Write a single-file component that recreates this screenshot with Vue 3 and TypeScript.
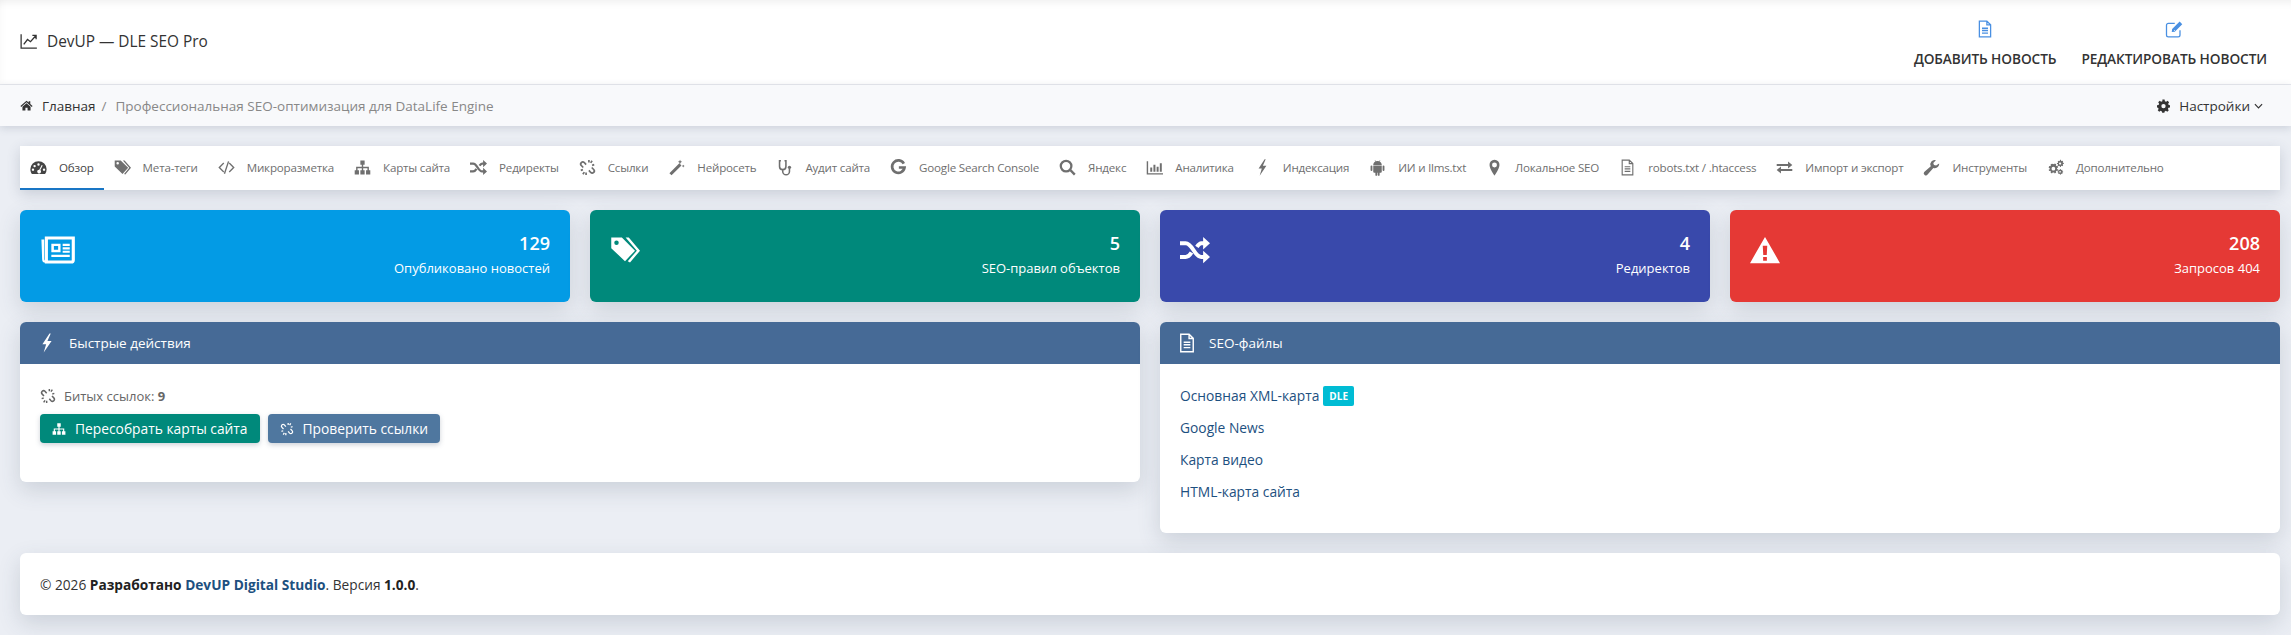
<template>
  <div class="page">
    <header class="topbar">
      <div class="brand">
        <svg class="ico brand-ico" viewBox="0 0 24 24"><path class="s thin" :d="icons.chart.s" /></svg>
        <span>DevUP — DLE SEO Pro</span>
      </div>
      <nav class="top-actions">
        <a class="top-action">
          <svg class="ico" viewBox="0 0 24 24"><path class="s thin" :d="icons.file.s" /></svg>
          <span>ДОБАВИТЬ НОВОСТЬ</span>
        </a>
        <a class="top-action">
          <svg class="ico" viewBox="0 0 24 24"><path class="s thin" :d="icons.edit.s" /><path :d="icons.edit.f" /></svg>
          <span>РЕДАКТИРОВАТЬ НОВОСТИ</span>
        </a>
      </nav>
    </header>

    <div class="crumbs">
      <div class="crumb-left">
        <svg class="ico home" viewBox="0 0 24 24"><path :d="icons.home.f" /></svg>
        <span class="crumb-home">Главная</span>
        <span class="crumb-sep">/</span>
        <span class="crumb-now">Профессиональная SEO-оптимизация для DataLife Engine</span>
      </div>
      <div class="crumb-right">
        <svg class="ico home" viewBox="0 0 24 24"><path :d="icons.cog.f" fill-rule="evenodd" /></svg>
        <span>Настройки</span>
        <svg class="chev" viewBox="0 0 10 6"><path d="M1 1l4 4 4-4" /></svg>
      </div>
    </div>

    <main class="content">
      <div class="tabs">
        <a v-for="(t, i) in tabs" :key="t.label" class="tab" :class="{ active: i === 0 }">
          <svg class="ico tab-ico" viewBox="0 0 24 24">
            <path v-if="icons[t.icon].f" :d="icons[t.icon].f" fill-rule="evenodd" />
            <path v-if="icons[t.icon].s" class="s" :d="icons[t.icon].s" :style="{ strokeWidth: icons[t.icon].w }" />
          </svg>
          <span>{{ t.label }}</span>
        </a>
      </div>

      <div class="stats">
        <div v-for="c in cards" :key="c.label" class="stat" :class="c.cls">
          <svg class="ico stat-ico" viewBox="0 0 24 24">
            <path v-if="icons[c.icon].f" :d="icons[c.icon].f" fill-rule="evenodd" />
            <path v-if="icons[c.icon].s" class="s" :d="icons[c.icon].s" :style="{ strokeWidth: icons[c.icon].w }" />
          </svg>
          <div class="stat-text">
            <div class="stat-num">{{ c.num }}</div>
            <div class="stat-label">{{ c.label }}</div>
          </div>
        </div>
      </div>

      <div class="panels">
        <section class="panel">
          <div class="panel-head">
            <svg class="ico head-ico" viewBox="0 0 24 24"><path :d="icons.bolt.f" /></svg>
            <span>Быстрые действия</span>
          </div>
          <div class="panel-body">
            <div class="broken">
              <svg class="ico" viewBox="0 0 24 24"><path class="s" :d="icons.unlink.s" /></svg>
              <span>Битых ссылок: <b>9</b></span>
            </div>
            <div class="btns">
              <button class="btn green">
                <svg class="ico" viewBox="0 0 24 24"><path :d="icons.sitemap.f" /></svg>
                Пересобрать карты сайта
              </button>
              <button class="btn steel">
                <svg class="ico" viewBox="0 0 24 24"><path class="s" :d="icons.unlink.s" /></svg>
                Проверить ссылки
              </button>
            </div>
          </div>
        </section>

        <section class="panel">
          <div class="panel-head">
            <svg class="ico head-ico" viewBox="0 0 24 24"><path class="s thin" :d="icons.file.s" /></svg>
            <span>SEO-файлы</span>
          </div>
          <ul class="panel-body links">
            <li><a>Основная XML-карта</a> <span class="badge">DLE</span></li>
            <li><a>Google News</a></li>
            <li><a>Карта видео</a></li>
            <li><a>HTML-карта сайта</a></li>
          </ul>
        </section>
      </div>

      <footer class="foot">
        <span>© 2026 <b>Разработано <a>DevUP Digital Studio</a></b>. Версия <b>1.0.0</b>.</span>
      </footer>
    </main>
  </div>
</template>

<script setup lang="ts">
type Icon = { f?: string; s?: string; w?: number }

// иконки нарисованы вручную в сетке 24x24
const icons: Record<string, Icon> = {
  dashboard: {
    f: 'M12 3A11.500 11.500 0 0 0 .5 14.500c0 2.500.8 4.800 2.200 6.500h18.600a11 11 0 0 0 2.200-6.500A11.500 11.500 0 0 0 12 3zM12 6a1.700 1.700 0 1 1 0 3.400A1.700 1.700 0 0 1 12 6zM6.500 8.300a1.700 1.700 0 1 1 0 3.400 1.700 1.700 0 0 1 0-3.400zM4.200 13.300a1.700 1.700 0 1 1 0 3.400 1.700 1.700 0 0 1 0-3.400zM19.800 13.300a1.700 1.700 0 1 1 0 3.400 1.700 1.700 0 0 1 0-3.400zM16.500 8.500l1.400.7-3.300 6.500a2.700 2.700 0 1 1-1.500-.6z'
  },
  tags: {
    f: 'M1 2h8.500L20 12.500 12 21 1 10.500zM5.200 4.300a1.800 1.800 0 1 0 0 3.600 1.800 1.800 0 0 0 0-3.600zM12.500 2H15l9 10.500L16 22l-1.800-1 7.300-8.500z'
  },
  code: {
    f: 'M7.500 5l1.300 1.300L3.200 12l5.600 5.700L7.500 19l-7-7zM16.500 5l7 7-7 7-1.300-1.300 5.600-5.700-5.600-5.700zM14 3l1.800.5L10 21l-1.800-.5z'
  },
  sitemap: {
    f: 'M9 2h6v6h-2v3h8v5h2v6h-6v-6h2v-3h-6v3h2v6H9v-6h2v-3H5v3h2v6H1v-6h2v-5h8V8H9z'
  },
  random: {
    f: 'M18.500 1.500l5.500 5-5.500 5zM18.500 12.500l5.500 5-5.500 5z',
    s: 'M0 6.500h4.500c5.500 0 7 11 12.500 11h2.500M0 17.500h4.500c2 0 3.500-1.500 4.700-3.500M13.500 9.500c1-1.500 2-3 3.500-3h2.500',
    w: 3.2
  },
  unlink: {
    s: 'M10 8 7.500 5a3 3 0 0 0-4.200 0 3 3 0 0 0 0 4.200L6 12M14 16l2.500 3a3 3 0 0 0 4.200 0 3 3 0 0 0 0-4.200L18 12M14 1.500v3.500M18.500 2.500l-2 3M21.500 8l-3 1M10 22.500V19M5.500 21.500l2-3M2.500 16l3-1',
    w: 2.4
  },
  magic: {
    f: 'M2 20 16 6l3 3L5 23zM17 1l1 2 2 1-2 1-1 2-1-2-2-1 2-1zM21.500 8l.7 1.300 1.300.7-1.300.7-.7 1.300-.7-1.300-1.300-.7 1.300-.7z'
  },
  stethoscope: {
    f: 'M19 9.500a2.300 2.300 0 1 1 0 4.600 2.300 2.300 0 0 1 0-4.600z',
    s: 'M7 2.500H5v8a4.500 4.500 0 0 0 9 0v-8h-2M9.500 15v2.500a4.700 4.700 0 0 0 9.500 0V13'
  },
  google: { s: 'M19.500 6.500A8.800 8.800 0 1 0 20.500 12h-8', w: 3.8 },
  search: {
    f: 'M15 16.800l2.200-2.200 6.300 6.300-2.400 2.400z',
    s: 'M10 2.500a7.500 7.500 0 1 0 0 15 7.500 7.500 0 0 0 0-15z',
    w: 3.2
  },
  bars: {
    f: 'M1 3h2v17h21v2H1zM6 12h2.800v6H6zM10.500 8h2.800v10h-2.800zM15 11h2.800v7H15zM19.500 6h2.800v12h-2.800z'
  },
  bolt: { f: 'M15 .5 6.500 13.500h4.500L8 23.500 17.500 9.500H12.500L16.500.5z' },
  android: {
    f: 'M6 9h12v9a1.500 1.500 0 0 1-1.500 1.500H15v3a1.300 1.300 0 0 1-2.600 0v-3h-.8v3a1.300 1.300 0 0 1-2.600 0v-3H7.500A1.500 1.500 0 0 1 6 18zM3.500 9A1.300 1.300 0 0 1 4.800 10.300v5.200a1.300 1.300 0 0 1-2.600 0v-5.200A1.300 1.300 0 0 1 3.500 9zM20.500 9a1.300 1.300 0 0 1 1.300 1.300v5.200a1.300 1.300 0 0 1-2.600 0v-5.200A1.300 1.300 0 0 1 20.500 9zM6 8.300C6 6 7.500 4.300 9 3.500L8 1.800l.5-.3 1 1.800a7 7 0 0 1 5 0l1-1.800.5.300-1 1.700c1.500.8 3 2.500 3 4.800z'
  },
  marker: {
    f: 'M12 1a7 7 0 0 0-7 7.500C5 13.500 12 23.500 12 23.500s7-10 7-15A7 7 0 0 0 12 1zM12 5a3.500 3.500 0 1 1 0 7 3.500 3.500 0 0 1 0-7z'
  },
  file: {
    s: 'M4.500 1.500h10l5 5v16h-15zM14.500 1.500v5h5M8 11h8M8 14h8M8 17.500h8',
    w: 1.6
  },
  exchange: {
    f: 'M1 7h16V3.500l6 5-6 5V10H1zM7 10.500v3.500h16v3H7v3.500l-6-5z'
  },
  wrench: {
    f: 'M22.800 6.500c.3 3.500-2.500 6.500-6 6.500-.8 0-1.500-.2-2.200-.4L6.500 22a3 3 0 0 1-4.800-3.700l9.300-8.200a6 6 0 0 1 7.300-8.400L14.500 5.500l1 3 3 .8z'
  },
  cogs: {
    f: 'M8.500 7 10 7.500l1-1.200 2 1.200-.5 1.500 1 1 1.500-.3.700 2.200-1.500.7v1.400l1.500.7-.7 2.200-1.500-.3-1 1 .5 1.500-2 1.200-1-1.200H8l-1 1.200-2-1.200.5-1.500-1-1-1.500.3L2.300 15l1.500-.7v-1.400l-1.500-.7L3 10l1.500.3 1-1L5 7.800l2-1.200zM9 11a2.600 2.600 0 1 0 0 5.200A2.600 2.600 0 0 0 9 11zM18.500 1l1 .2.300 1.200 1.200.5 1-.6.8.8-.6 1 .5 1.200 1.200.3v1.200l-1.200.3-.5 1.200.6 1-.8.8-1-.6-1.200.5-.3 1.200h-1.200l-.3-1.200-1.200-.5-1 .6-.8-.8.6-1-.5-1.200L14 7V5.800l1.200-.3.500-1.200-.6-1 .8-.8 1 .6 1.200-.5zM18.500 4.800a1.600 1.600 0 1 0 0 3.200 1.600 1.600 0 0 0 0-3.200zM18.500 14l.8.200.3.900.9.400.8-.4.6.6-.4.8.4.9.9.3v.9l-.9.3-.4.9.4.8-.6.6-.8-.4-.9.4-.3.900h-.9l-.3-.9-.9-.4-.8.4-.6-.6.4-.8-.4-.9-.9-.3v-.9l.9-.3.4-.9-.4-.8.6-.6.8.4.9-.4.3-.9zM18.500 16.800a1.200 1.200 0 1 0 0 2.400 1.200 1.200 0 0 0 0-2.400z'
  },
  home: {
    f: 'M12 3 .8 13l1.500 1.600L12 6l9.700 8.600L23.200 13 19 9.300V4h-3v2.600zM12 8l-7.500 6.500V21h5.500v-5h4v5h5.500v-6.500z'
  },
  cog: {
    f: 'M10 1h4l.6 3 2.300 1 2.600-1.700 2.800 2.800L20.600 8.700l1 2.300 2.400.5v4l-2.900.5-1 2.300 1.700 2.500-2.800 2.800-2.600-1.700-2.300 1-.5 2.500h-4l-.6-2.500-2.300-1-2.600 1.700-2.800-2.800 1.700-2.500-1-2.300L0 15.500v-4l2.900-.5 1-2.300L2.200 6.100 5 3.300 7.600 5l2.300-1zM12 9a4 4 0 1 0 0 8 4 4 0 0 0 0-8z'
  },
  chart: { s: 'M1.500 3v18.500h21M5 16.500l5-6.500 4 3 7-8M16.500 4.500h5v5' },
  edit: {
    s: 'M20 13.500V20a2.500 2.500 0 0 1-2.500 2.500h-13A2.500 2.500 0 0 1 2 20V7a2.500 2.500 0 0 1 2.500-2.500H13',
    f: 'M19.500 2 23 5.500 13 15.500l-4 .5.500-4zM12 13v1.500h1.500z'
  },
  newspaper: {
    f: 'M1 4.500h2v14a1 1 0 0 0 1 1V21a2.500 2.500 0 0 1-2.500-2.500zM8 7.500h6.500v6H8zM9.800 9.200v2.600h3V9.200zM16 7.500h5v1.700h-5zM16 10h5v1.700h-5zM16 12.500h5v1.500h-5zM8 15.300h13V17H8z',
    s: 'M4.500 3.500h19V19a1.500 1.500 0 0 1-1.500 1.500H4.500z'
  },
  warning: {
    f: 'M12 1.500 24 22.500H0zM10.200 8.500l.4 7.500h2.800l.4-7.500zM10.500 17.500v3h3v-3z'
  }
}

const tabs = [
  { label: 'Обзор', icon: 'dashboard' },
  { label: 'Мета-теги', icon: 'tags' },
  { label: 'Микроразметка', icon: 'code' },
  { label: 'Карты сайта', icon: 'sitemap' },
  { label: 'Редиректы', icon: 'random' },
  { label: 'Ссылки', icon: 'unlink' },
  { label: 'Нейросеть', icon: 'magic' },
  { label: 'Аудит сайта', icon: 'stethoscope' },
  { label: 'Google Search Console', icon: 'google' },
  { label: 'Яндекс', icon: 'search' },
  { label: 'Аналитика', icon: 'bars' },
  { label: 'Индексация', icon: 'bolt' },
  { label: 'ИИ и llms.txt', icon: 'android' },
  { label: 'Локальное SEO', icon: 'marker' },
  { label: 'robots.txt / .htaccess', icon: 'file' },
  { label: 'Импорт и экспорт', icon: 'exchange' },
  { label: 'Инструменты', icon: 'wrench' },
  { label: 'Дополнительно', icon: 'cogs' }
]

const cards = [
  { num: 129, label: 'Опубликовано новостей', icon: 'newspaper', cls: 'blue' },
  { num: 5, label: 'SEO-правил объектов', icon: 'tags', cls: 'teal' },
  { num: 4, label: 'Редиректов', icon: 'random', cls: 'indigo' },
  { num: 208, label: 'Запросов 404', icon: 'warning', cls: 'red' }
]
</script>

<style>
html,
body {
  margin: 0;
  background: #ebeef4;
}
</style>

<style scoped>
.page {
  font-family: "Open Sans", "Noto Sans", sans-serif;
  font-size: 13px;
  color: #333;
  width: 2291px;
  min-height: 635px;
  background: #ebeef4;
}

a {
  text-decoration: none;
}

.ico {
  display: block;
  fill: currentColor;
  flex: none;
  overflow: visible;
}

.s {
  fill: none;
  stroke: currentColor;
  stroke-width: 2.2;
}

.s.thin {
  stroke-width: 1.7;
}

.topbar {
  height: 84px;
  padding: 0 24px 0 20px;
  display: flex;
  align-items: center;
  justify-content: space-between;
  background: #fff;
  border-bottom: 1px solid #e7e9ee;
  box-shadow: inset 0 9px 8px -7px rgba(0, 0, 0, 0.07), inset 8px 0 8px -7px rgba(0, 0, 0, 0.03);
}

.brand {
  display: flex;
  align-items: center;
  gap: 9px;
  font-size: 15.4px;
  font-weight: 500;
  color: #333;
  margin-top: -2px;
}

.brand-ico {
  width: 18px;
  height: 18px;
}

.top-actions {
  display: flex;
  gap: 25px;
  align-self: flex-start;
  padding-top: 20px;
}

.top-action {
  display: flex;
  flex-direction: column;
  align-items: center;
  gap: 11px;
  font-size: 13.7px;
  font-weight: 600;
  letter-spacing: -0.1px;
  color: #333;
}

.top-action .ico {
  width: 18px;
  height: 18px;
  color: #4a90e2;
}

.crumbs {
  height: 41px;
  padding: 0 28px 0 20px;
  display: flex;
  align-items: center;
  justify-content: space-between;
  background: #f8f9fb;
  box-shadow: 0 2px 8px rgba(60, 75, 100, 0.18);
  position: relative;
}

.crumb-left,
.crumb-right {
  display: flex;
  align-items: center;
  font-size: 13.5px;
}

.home {
  width: 13px;
  height: 13px;
  color: #333;
}

.crumb-home {
  margin-left: 9px;
}

.crumb-sep {
  margin: 0 9px 0 6px;
  color: #888;
}

.crumb-now {
  color: #888;
}

.crumb-right span {
  margin-left: 9px;
}

.chev {
  width: 9px;
  height: 6px;
  margin-left: 4px;
  fill: none;
  stroke: #333;
  stroke-width: 1.3;
}

.content {
  padding: 20px 11px 22px 20px;
  display: flex;
  flex-direction: column;
  gap: 20px;
}

.tabs {
  height: 44px;
  display: flex;
  background: #fff;
  box-shadow: 0 4px 14px rgba(60, 75, 100, 0.2);
}

.tab {
  display: flex;
  align-items: center;
  gap: 12px;
  padding: 0 10px;
  font-size: 11.6px;
  letter-spacing: -0.2px;
  color: #6f6f6f;
  border-bottom: 2px solid transparent;
  box-sizing: border-box;
}

.tab.active {
  color: #444;
  border-bottom-color: #1976c5;
}

.tab-ico {
  width: 17px;
  height: 17px;
}

.stats {
  display: grid;
  grid-template-columns: repeat(4, 1fr);
  gap: 20px;
}

.stat {
  height: 92px;
  box-sizing: border-box;
  padding: 22px 20px 0;
  display: flex;
  justify-content: space-between;
  color: #fff;
  border-radius: 6px;
  box-shadow: 0 8px 22px rgba(60, 75, 100, 0.18);
}

.stat.blue { background: #039be5; }
.stat.teal { background: #00897b; }
.stat.indigo { background: #3949ab; }
.stat.red { background: #e53935; }

.stat-ico {
  width: 30px;
  height: 30px;
  margin-top: 3px;
}

.stat.blue .stat-ico {
  width: 34px;
  height: 34px;
  margin-top: 1px;
}

.stat-text {
  text-align: right;
}

.stat-num {
  font-size: 18px;
  font-weight: 600;
  line-height: 22px;
}

.stat-label {
  font-size: 13px;
  line-height: 18px;
  margin-top: 5px;
}

.panels {
  display: grid;
  grid-template-columns: 1fr 1fr;
  gap: 20px;
  align-items: start;
}

.panel {
  background: #fff;
  border-radius: 6px;
  overflow: hidden;
  box-shadow: 0 8px 22px rgba(60, 75, 100, 0.18);
}

.panel-head {
  height: 42px;
  padding: 0 20px;
  display: flex;
  align-items: center;
  background: #466a96;
  color: #fff;
  font-size: 13.5px;
  font-weight: 500;
}

.head-ico {
  width: 20px;
  height: 20px;
  margin: 0 12px 0 -3px;
}

.panel-body {
  padding: 22px 20px 39px;
}

.broken {
  display: flex;
  align-items: center;
  gap: 8px;
  color: #666;
  font-size: 13px;
  line-height: 20px;
}

.broken .ico {
  width: 16px;
  height: 16px;
}

.btns {
  display: flex;
  gap: 8px;
  margin-top: 8px;
}

.btn {
  height: 29px;
  padding: 0 12px;
  display: flex;
  align-items: center;
  gap: 9px;
  border: 0;
  border-radius: 4px;
  color: #fff;
  font: inherit;
  font-size: 13.8px;
  box-shadow: 0 2px 5px rgba(60, 75, 100, 0.25);
}

.btn .ico {
  width: 14px;
  height: 14px;
}

.btn.green { background: #00897b; }
.btn.steel { background: #4f779f; }

.links {
  list-style: none;
  margin: 0;
  padding: 22px 20px 26px;
  font-size: 13.8px;
}

.links li {
  height: 32px;
  display: flex;
  align-items: center;
  gap: 4px;
}

.links li:first-child {
  height: 31px;
  margin-top: -6px;
}

.links a {
  color: #1d5080;
}

.badge {
  padding: 0 6px;
  height: 20px;
  line-height: 20px;
  background: #00bcd4;
  color: #fff;
  font-size: 10px;
  font-weight: 700;
  border-radius: 2px;
}

.foot {
  height: 62px;
  padding: 0 20px;
  display: flex;
  align-items: center;
  font-size: 13.7px;
  background: #fff;
  border-radius: 6px;
  box-shadow: 0 8px 22px rgba(60, 75, 100, 0.18);
}

.foot b {
  font-weight: 700;
  color: #222;
}

.foot a {
  color: #1d5080;
}
</style>
